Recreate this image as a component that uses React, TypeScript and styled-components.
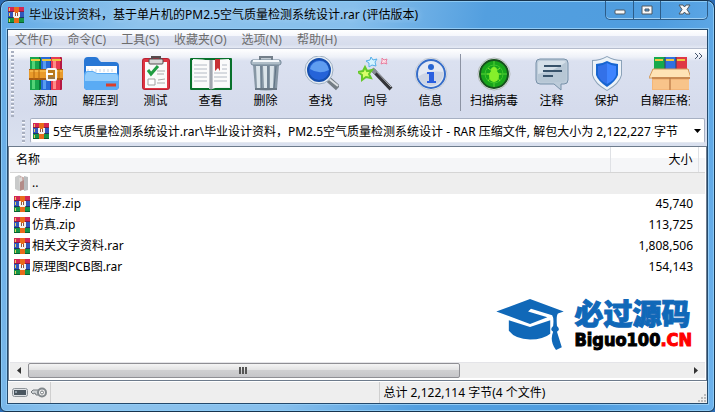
import React from "react";
import styled, { createGlobalStyle } from "styled-components";

const Global = createGlobalStyle`
  * { box-sizing: border-box; }
  body { margin: 0; background: #2b6cb4; }
  body, button, input, table {
    font-family: "Noto Sans", "Noto Sans CJK SC", sans-serif;
    font-size: 12px;
    line-height: 16px;
    color: #000;
  }
  button { border: 0; padding: 0; background: none; }
  svg { display: block; flex: none; }
`;

const Window = styled.div`
  min-height: 100vh;
  display: flex;
  flex-direction: column;
  padding: 0 6px 7px;
  border: 1px solid #17344e;
  border-radius: 8px 8px 6px 6px;
  box-shadow: inset 0 0 0 1px #8ccaf5;
  background: linear-gradient(100deg, #62aae6 0%, #8ec3ec 18%, #87bfec 45%, #539fdf 62%, #4f9ddf 84%, #6db2ec 100%);
`;

const TitleBar = styled.header`
  height: 28px;
  flex: none;
  display: flex;
  align-items: center;
  padding-left: 1px;
`;

const Title = styled.h1`
  flex: 1;
  min-width: 0;
  margin: 0 0 0 5px;
  font-size: 12px;
  line-height: 16px;
  font-weight: 400;
  white-space: nowrap;
  overflow: hidden;
  text-shadow: 0 0 6px #b9dcf7;
`;

const Caption = styled.div`
  align-self: flex-start;
  display: flex;
  height: 19px;
  border: 1px solid #2c5c88;
  border-top: 0;
  border-radius: 0 0 5px 5px;
  box-shadow: inset 0 -1px 0 #9fd0f5;
`;

const CaptionButton = styled.button<{ $wide?: boolean }>`
  width: ${(p) => (p.$wide ? 47 : 27)}px;
  display: flex;
  align-items: center;
  justify-content: center;
  & + & { border-left: 1px solid #2c5c88; }
`;

const Client = styled.div`
  flex: 1;
  display: flex;
  flex-direction: column;
  border: 1px solid #24496b;
  outline: 1px solid #92cbf5;
  background: #eee;
`;

const MenuBar = styled.nav`
  height: 19px;
  flex: none;
  display: flex;
  padding-top: 1px;
  background: linear-gradient(#fff 0%, #f5f7fc 32%, #dde2f0 36%, #d6dcec 80%, #e4e9f4 100%);
  border-bottom: 1px solid #b5bccd;
`;

const MenuItem = styled.button`
  padding: 0 8px 0 7px;
  color: #6d6d6d;
  white-space: nowrap;
`;

const Bars = styled.div`
  flex: none;
  background: linear-gradient(#fff 0, #eef1f8 8px, #dbe1f0 12px, #d5dbec 60px, #dae1ef 100%);
`;

const Band = styled.div`
  display: flex;
`;

const Grip = styled.div`
  width: 3px;
  margin: 2px 1px 0 3px;
  flex: none;
  background: repeating-linear-gradient(#a9b0c0 0, #a9b0c0 2px, #f8f9fc 2px, #f8f9fc 3px, transparent 3px, transparent 4px);
`;

const Tools = styled.div`
  flex: 1;
  min-width: 0;
  display: flex;
  overflow: hidden;
  height: 68px;
  padding-top: 7px;
  margin-left: 3px;
`;

const ToolButton = styled.button<{ $width?: number }>`
  width: ${(p) => p.$width ?? 55}px;
  flex: none;
  display: flex;
  flex-direction: column;
  align-items: center;
  justify-content: flex-start;
  gap: 1px;
  white-space: nowrap;
`;

const ToolSeparator = styled.div`
  width: 1px;
  height: 57px;
  flex: none;
  background: #8c93a3;
  margin: -2px 3px 0 2px;
`;

const More = styled.button`
  width: 17px;
  height: 14px;
  flex: none;
  display: flex;
  justify-content: center;
  align-items: center;
`;

const AddressBand = styled(Band)`
  height: 29px;
  padding: 1px 2px 3px 11px;
`;

const AddressBox = styled.div`
  flex: 1;
  min-width: 0;
  display: flex;
  align-items: center;
  margin-left: 4px;
  padding-left: 2px;
  border: 1px solid #a7b0c2;
  border-bottom-color: #e4e8f0;
  border-radius: 2px;
  background: #fff;
`;

const AddressInput = styled.input`
  flex: 1;
  min-width: 0;
  height: 22px;
  margin-left: 4px;
  padding: 0;
  border: 0;
  outline: 0;
  background: transparent;
`;

const DropButton = styled.button`
  width: 14px;
  height: 22px;
  display: flex;
  align-items: center;
  justify-content: center;
`;

const ListPane = styled.main`
  position: relative;
  flex: 1;
  display: flex;
  flex-direction: column;
  justify-content: space-between;
  padding: 0 1px 2px;
  border: 1px solid #6d7b8c;
  background: #fff;
`;

const Files = styled.table`
  width: 100%;
  border-collapse: collapse;
  table-layout: fixed;
`;

const Head = styled.th<{ $size?: boolean; $end?: boolean }>`
  width: ${(p) => (p.$size ? "88px" : p.$end ? "7px" : "auto")};
  height: 25px;
  padding: ${(p) => (p.$end ? "0" : "2px 5px 0 6px")};
  font-weight: 400;
  text-align: ${(p) => (p.$size ? "right" : "left")};
  background: linear-gradient(#fff 45%, #f5f6f8 46%);
  border-bottom: 1px solid #d5d5d5;
  border-right: ${(p) => (p.$end ? "0" : "1px solid #dfe1e5")};
`;

const FileRow = styled.tr<{ $active?: boolean }>`
  height: 21px;
  background: ${(p) =>
    p.$active ? "linear-gradient(90deg, #fff 20px, #eee 20px)" : "none"};
`;

const Cell = styled.td<{ $size?: boolean }>`
  padding: ${(p) => (p.$size ? "0 5px 0 0" : "0 0 0 4px")};
  text-align: ${(p) => (p.$size ? "right" : "left")};
`;

const EndCell = styled.td`
  padding: 0;
`;

const FileName = styled.div`
  display: flex;
  align-items: center;
  gap: 2px;
  height: 21px;
`;

const ScrollBar = styled.div`
  display: flex;
  height: 16px;
  background: #eee;
  border-top: 1px solid #e4e4e8;
`;

const ScrollArrow = styled.button`
  width: 18px;
  flex: none;
  display: flex;
  align-items: center;
  justify-content: center;
`;

const ScrollTrack = styled.div`
  flex: 1;
  display: flex;
`;

const ScrollThumb = styled.div`
  width: 65.5%;
  display: flex;
  align-items: center;
  justify-content: center;
  border: 1px solid #8f8f94;
  border-radius: 2px;
  background: linear-gradient(#f4f4f4, #e3e3e4 45%, #cfcfd1 50%, #c6c6c9);
`;

const Watermark = styled.div`
  position: absolute;
  right: 14px;
  bottom: 29px;
  display: flex;
  align-items: flex-start;
  gap: 8px;
`;

const BrandName = styled.div`
  height: 30px;
  font: 900 29px/32px "Liberation Sans", "Noto Sans CJK SC", sans-serif;
  color: #1068b8;
  -webkit-text-stroke: 1px #1068b8;
`;

const BrandSite = styled.div`
  font: 700 18px/22px "DejaVu Sans Condensed", "DejaVu Sans", sans-serif;
  -webkit-text-stroke: 1px currentColor;
  white-space: nowrap;
  span { color: #f00; }
`;

const StatusBar = styled.footer`
  flex: none;
  height: 22px;
  display: flex;
  border-top: 1px solid #fff;
  background: #eee;
`;

const StatusCell = styled.div<{ $icons?: boolean }>`
  ${(p) => (p.$icons ? "width: 42px; flex: none;" : "flex: 1;")}
  display: flex;
  align-items: center;
  gap: 2px;
  padding: 0 0 0 4px;
  & + & { border-left: 1px solid #cfcfcf; }
`;

const SizeGrip = styled.svg`
  align-self: flex-end;
  margin: 0 1px 1px auto;
`;

function RarIcon() {
  return (
    <svg width="16" height="16" viewBox="0 0 16 16" aria-hidden="true">
      <rect y="0" width="16" height="5" fill="#d32755" />
      <rect y="4" width="16" height="1" fill="#841d45" />
      <rect y="5" width="16" height="6" fill="#3157bd" />
      <rect y="10" width="16" height="1" fill="#1b3468" />
      <rect y="11" width="16" height="5" fill="#159447" />
      <rect y="15" width="16" height="1" fill="#096130" />
      <path d="M1 1h1v3H1zM1 6h1v3H1zM1 12h1v3H1z" fill="#e9ce5c" />
      <rect x="6" width="5" height="16" fill="#e96b1b" />
      <path d="M5 6h7v5H5z" fill="#8c5441" />
      <path d="M5 5h2v5H5zM10 5h2v5h-2zM6 9h5v2H6z" fill="#f4f1ed" />
      <path d="M8 6h1v3H8z" fill="#fff" />
    </svg>
  );
}

function FolderUpIcon() {
  return (
    <svg width="16" height="18" viewBox="0 0 16 18" aria-hidden="true">
      <path d="M1 3l4-2 2 1v14l-2 1-4-2z" fill="#c9caca" />
      <path d="M6 2l6 2v12H6z" fill="#c8a9a5" />
      <path d="M5 4l3-1 1 12-3 2z" fill="#dcd9d7" />
      <path d="M10 2l4 1v13l-4 1z" fill="#b9bcbe" />
      <path d="M6 8l4-2v9l-4 2z" fill="#b38c88" />
    </svg>
  );
}

function Book({ x, dark, main, light }: { x: number; dark: string; main: string; light: string }) {
  return (
    <g>
      <rect x={x} y="1" width="11" height="33" rx="1" fill={dark} />
      <rect x={x} y="1" width="9" height="33" fill={main} />
      <rect x={x + 2} y="5" width="3" height="28" fill={light} />
      <path d={`M${x + 1} 4h9`} stroke="#edc83e" strokeWidth="2" />
    </g>
  );
}

const drawings: Record<string, React.ReactNode> = {
  add: (
    <>
      <Book x={1} dark="#087637" main="#18a64d" light="#53d477" />
      <Book x={12} dark="#153fa4" main="#286ad6" light="#579cf0" />
      <Book x={22} dark="#b51742" main="#e73a50" light="#ff8a86" />
      <path d="M0 13h34v11H0z" fill="#a85a12" />
      <path d="M0 14h34v8H0z" fill="#e99a2a" />
      <path d="M1 15h32" stroke="#ffcf62" />
      <path d="M5 13v11M10 13v11M30 13v11" stroke="#b5690f" />
      <rect x="18" y="13" width="9" height="11" rx="1" fill="#b8791f" stroke="#f5f5f4" strokeWidth="2" />
      <path d="M17 18h7" stroke="#fff" strokeWidth="2" />
      <path d="M19 22h7" stroke="#777" />
    </>
  ),
  extract: (
    <>
      <path d="M0 5Q0 1 4 1h7q3 0 4 3l2 2h14q4 0 4 4v20q0 4-4 4H4q-4 0-4-4z" fill="#2877d5" />
      <path d="M2 10h31v9H2z" fill="#fff" />
      <path d="M4 13v3M8 13v3M12 13v3M16 13v3M20 13v3M24 13v3M28 13v3" stroke="#c7d4e4" />
      <path d="M0 19q0-4 4-4h5l4 2h18q4 0 4 4v9q0 4-4 4H4q-4 0-4-4z" fill="#5aabf4" />
      <path d="M1 20q1-4 3-4h5l4 2h18q3 0 3 3v4H1z" fill="#92ccfb" />
      <path d="M22 29h10" stroke="#dc3e29" strokeWidth="3" />
    </>
  ),
  test: (
    <>
      <rect x="3" y="2" width="28" height="32" rx="3" fill="#b82132" />
      <rect x="4" y="3" width="26" height="30" rx="2" fill="#df3442" />
      <path d="M6 6h22v26H6z" fill="#fafafa" />
      <rect x="10" y="3" width="14" height="5" rx="1" fill="#d8d8d8" stroke="#544c4f" />
      <path d="M13 3V1h8v2" fill="none" stroke="#554c4e" strokeWidth="2" />
      <path d="M9 14l3 4 7-8" fill="none" stroke="#219d42" strokeWidth="3" />
      <path d="M18 15h8M18 18h7M19 24l7-1M18 27h8" stroke="#aaa" />
      <path d="M9 23h7v6H9z" fill="#fff" stroke="#a1a1a1" />
    </>
  ),
  view: (
    <>
      <path d="M-4 3q0-1 1-1h40q1 0 1 1v30q0 1-1 1H-3q-1 0-1-1z" fill="#08712b" />
      <path d="M-2 4h18v28H-2zM18 4h18v28H18z" fill="#eeeff1" />
      <path d="M-1 3q11 0 17 2v27H-1zM18 5q6-2 17-2v28q-10-1-17 2z" fill="#fbfbfb" />
      <path d="M15 4h4v29h-4z" fill="#c3c5cc" />
      <path d="M17 4v30" stroke="#7f8791" />
      <path d="M0 9h13M0 13h13M0 17h13M0 21h13M0 25h13M20 17h13M20 21h13M20 25h13M28 9h5M28 13h5" stroke="#b3bac4" />
      <path d="M21 3h5v12l-2-3-3 3z" fill="#c73035" />
    </>
  ),
  remove: (
    <>
      <path d="M11 5V1h12v4" fill="#c0c9d1" stroke="#737e89" strokeWidth="2" />
      <path d="M4 9h26l-2 24q-11 3-22 0z" fill="#8797a5" />
      <path d="M7 10h4l1 22H8zM14 10h4v22h-3zM21 10h4l-1 22h-3z" fill="#dbe4ea" />
      <path d="M12 10v22M19 10v22M27 10l-2 22" stroke="#5f7385" />
      <rect x="2" y="4" width="30" height="5" rx="2" fill="#aebdc8" stroke="#738697" />
      <path d="M4 5h26" stroke="#f3f7fa" strokeWidth="2" />
      <path d="M6 33h22" stroke="#697784" strokeWidth="2" />
    </>
  ),
  find: (
    <>
      <path d="M24 23l10 9" stroke="#737c84" strokeWidth="6" />
      <path d="M24 22l10 8" stroke="#dde1e4" strokeWidth="2" />
      <circle cx="15" cy="14" r="14" fill="#e6edf4" stroke="#9fb0c2" />
      <circle cx="15" cy="14" r="11" fill="#2563d8" stroke="#164fae" strokeWidth="2" />
      <path d="M6 13q2-8 10-8 7 0 9 9-10 5-19-1z" fill="#5f9df0" />
    </>
  ),
  wizard: (
    <>
      <path d="M14 14l18 19" stroke="#343539" strokeWidth="4" />
      <path d="M15 13l17 18" stroke="#b9bec2" />
      <path d="M13 13l4 4" stroke="#858d93" strokeWidth="4" />
      <path d="M6 11l2 4 5-1-3 4 2 4-5-1-4 3v-5l-4-3 5-1z" fill="#d9ff6a" stroke="#65c829" strokeWidth="2" />
      <path d="M12 1l2 3 4-1-2 3 1 4-4-1-3 2v-4l-3-2 4-1z" fill="#d6f4ff" stroke="#55afe9" />
      <path d="M23 2l2 2 3-1-1 3 1 2-3-1-3 1 1-3z" fill="#ffe2e9" stroke="#e880a0" />
    </>
  ),
  info: (
    <>
      <circle cx="17" cy="18" r="16" fill="#f1f3f6" stroke="#c2c9d4" />
      <circle cx="17" cy="18" r="14" fill="#e4e9f3" stroke="#356cc8" strokeWidth="2" />
      <path d="M4 21q9-7 26-5-2 13-13 14Q8 30 4 21z" fill="#cdd5e5" />
      <circle cx="17" cy="11" r="3" fill="#2766d2" />
      <path d="M13 16h7v9h2v2h-9v-2h2v-7h-2z" fill="#2a5fe0" />
    </>
  ),
  virus: (
    <>
      <circle cx="17" cy="18" r="16" fill="#f5f6f5" stroke="#adb5b5" />
      <circle cx="17" cy="18" r="14" fill="#18a51b" stroke="#17501e" strokeWidth="2" />
      <path d="M4 18h26M17 5v26" stroke="#58cf39" />
      <circle cx="17" cy="18" r="9" fill="none" stroke="#3cc62a" />
      <path d="M11 12l4 3h4l4-3M10 18h5M19 18h5M11 25l3-4M23 25l-3-4" fill="none" stroke="#7be82f" />
      <ellipse cx="17" cy="20" rx="5" ry="6" fill="#86ef2b" />
      <circle cx="17" cy="14" r="3" fill="#86ef2b" />
    </>
  ),
  comment: (
    <>
      <path d="M5 3h24q4 0 4 4v17q0 4-4 4h-3v6l-7-6H5q-4 0-4-4V7q0-4 4-4z" fill="#bccbd9" stroke="#7790a8" />
      <path d="M5 5h24q2 0 2 2v17q0 2-2 2H5q-2 0-2-2V7q0-2 2-2z" fill="#d5e0e9" />
      <path d="M3 18q17-3 28-12v18q0 2-2 2H5q-2 0-2-2z" fill="#b7c7d5" />
      <path d="M9 10h17M8 15h19M8 20h10" stroke="#38536b" strokeWidth="2" />
    </>
  ),
  protect: (
    <>
      <path d="M17 0q7 4 15 4v15q-2 9-15 16Q4 28 2 19V4q8 0 15-4z" fill="#8ba2b9" />
      <path d="M17 1q7 4 14 4v14q-2 8-14 15Q5 27 3 19V5q7 0 14-4z" fill="#edf3f8" />
      <path d="M17 5q5 3 11 3v11q-2 6-11 12Q8 25 6 19V8q6 0 11-3z" fill="#1765d0" />
      <path d="M17 7q5 3 9 3v9q-1 5-9 9z" fill="#3e84ff" />
      <path d="M17 7q-5 3-9 3v9q1 5 9 9z" fill="#3371e8" />
    </>
  ),
  sfx: (
    <>
      <path d="M1 1h11v13H1z" fill="#15a94b" />
      <path d="M12 1h11v13H12z" fill="#2f70df" />
      <path d="M23 1h11v13H23z" fill="#df3744" />
      <path d="M12 1v12M23 1v12" stroke="#34405f" />
      <path d="M2 4h8M13 4h8M24 4h8" stroke="#efc83e" strokeWidth="2" />
      <path d="M-1 13h37v21H-1z" fill="#f4b678" />
      <path d="M0 13h35l3 9H-4z" fill="#ffe3b5" stroke="#d39a5d" />
      <path d="M0 24h16v9H0zM18 24h18v9H18z" fill="#f8c48a" />
      <path d="M-1 22h38" stroke="#c98a52" strokeWidth="2" />
      <path d="M17 22v12" stroke="#af7444" />
    </>
  ),
};

function ToolIcon({ name }: { name: string }) {
  const wide = name === "view" || name === "sfx";
  return (
    <svg
      width={wide ? 42 : 36}
      height="36"
      viewBox={wide ? "-4 0 42 36" : "-1 0 36 36"}
      aria-hidden="true"
    >
      {drawings[name]}
    </svg>
  );
}

const menus = ["文件(F)", "命令(C)", "工具(S)", "收藏夹(O)", "选项(N)", "帮助(H)"];

const mainTools = [
  ["add", "添加"],
  ["extract", "解压到"],
  ["test", "测试"],
  ["view", "查看"],
  ["remove", "删除"],
  ["find", "查找"],
  ["wizard", "向导"],
  ["info", "信息"],
];

const files = [
  ["c程序.zip", "45,740"],
  ["仿真.zip", "113,725"],
  ["相关文字资料.rar", "1,808,506"],
  ["原理图PCB图.rar", "154,143"],
];

export default function App() {
  return (
    <>
      <Global />
      <Window>
        <TitleBar>
          <RarIcon />
          <Title>毕业设计资料，基于单片机的PM2.5空气质量检测系统设计.rar (评估版本)</Title>
          <Caption>
            <CaptionButton aria-label="最小化">
              <svg width="12" height="12">
                <rect x="1" y="6" width="10" height="4" rx="1" fill="#f8f8f8" stroke="#4d5862" />
              </svg>
            </CaptionButton>
            <CaptionButton aria-label="最大化">
              <svg width="12" height="12">
                <path d="M1 2h10v8H1zM4 5v2h4V5z" fill="#f8f8f8" fillRule="evenodd" stroke="#4d5862" />
              </svg>
            </CaptionButton>
            <CaptionButton $wide aria-label="关闭">
              <svg width="13" height="12">
                <path d="M1 1h4l1.5 2L8 1h4L9 5.5l3 4.500H8L6.500 8 5 10H1l3-4.500z" fill="#f8f8f8" stroke="#4d5862" />
              </svg>
            </CaptionButton>
          </Caption>
        </TitleBar>
        <Client>
          <MenuBar>
            {menus.map((m) => (
              <MenuItem key={m}>{m}</MenuItem>
            ))}
          </MenuBar>
          <Bars>
            <Band>
              <Grip />
              <Tools>
                {mainTools.map(([icon, label]) => (
                  <ToolButton key={icon}>
                    <ToolIcon name={icon} />
                    {label}
                  </ToolButton>
                ))}
                <ToolSeparator />
                <ToolButton $width={60}>
                  <ToolIcon name="virus" />
                  扫描病毒
                </ToolButton>
                <ToolButton>
                  <ToolIcon name="comment" />
                  注释
                </ToolButton>
                <ToolButton>
                  <ToolIcon name="protect" />
                  保护
                </ToolButton>
                <ToolButton $width={72}>
                  <ToolIcon name="sfx" />
                  自解压格式
                </ToolButton>
              </Tools>
              <More aria-label="更多">
                <svg width="9" height="6">
                  <path d="M1 0l3 3-3 3M5 0l3 3-3 3" fill="none" stroke="#44546c" />
                </svg>
              </More>
            </Band>
            <AddressBand>
              <Grip />
              <AddressBox>
                <RarIcon />
                <AddressInput
                  aria-label="地址"
                  defaultValue="5空气质量检测系统设计.rar\毕业设计资料，PM2.5空气质量检测系统设计 - RAR 压缩文件, 解包大小为 2,122,227 字节"
                />
                <DropButton aria-label="展开地址">
                  <svg width="7" height="4">
                    <path d="M0 0h7L3.500 4z" />
                  </svg>
                </DropButton>
              </AddressBox>
            </AddressBand>
          </Bars>
          <ListPane>
            <Files>
              <thead>
                <tr>
                  <Head scope="col">名称</Head>
                  <Head scope="col" $size>
                    大小
                  </Head>
                  <Head as="td" $end />
                </tr>
              </thead>
              <tbody>
                <FileRow $active>
                  <Cell>
                    <FileName>
                      <FolderUpIcon />
                      ..
                    </FileName>
                  </Cell>
                  <Cell $size />
                  <EndCell />
                </FileRow>
                {files.map(([name, size]) => (
                  <FileRow key={name}>
                    <Cell>
                      <FileName>
                        <RarIcon />
                        {name}
                      </FileName>
                    </Cell>
                    <Cell $size>{size}</Cell>
                    <EndCell />
                  </FileRow>
                ))}
              </tbody>
            </Files>
            <Watermark>
              <svg width="71" height="52" viewBox="0 0 71 54" aria-hidden="true">
                <path d="M0 13L35 0l35 13-6 2q-2 2-1 13 4 4 0 6l5 16-6 3q-7-9-3-19-4-2 0-6 1-8-1-11L36 10l-3 3 20 6-18 7z" fill="#1068b8" />
                <path d="M13 22l22 7 21-7v14q-7 6-21 6-15 0-22-9z" fill="#1068b8" />
              </svg>
              <div>
                <BrandName>必过源码</BrandName>
                <BrandSite>
                  Biguo100<span>.CN</span>
                </BrandSite>
              </div>
            </Watermark>
            <ScrollBar>
              <ScrollArrow aria-label="向左滚动">
                <svg width="4" height="7">
                  <path d="M4 0v7L0 3.500z" fill="#333" />
                </svg>
              </ScrollArrow>
              <ScrollTrack>
                <ScrollThumb>
                  <svg width="9" height="7">
                    <path d="M1 0v7M4 0v7M7 0v7" stroke="#555" strokeWidth="2" />
                  </svg>
                </ScrollThumb>
              </ScrollTrack>
              <ScrollArrow aria-label="向右滚动">
                <svg width="4" height="7">
                  <path d="M0 0v7l4-3.500z" fill="#333" />
                </svg>
              </ScrollArrow>
            </ScrollBar>
          </ListPane>
          <StatusBar>
            <StatusCell $icons>
              <svg width="16" height="9" aria-hidden="true">
                <rect x="0.500" y="0.500" width="15" height="8" rx="2" fill="#dfe2e5" stroke="#8d9398" />
                <rect x="2" y="2" width="12" height="5" fill="#4b5760" />
                <path d="M3 4h2" stroke="#d5e3ed" />
              </svg>
              <svg width="17" height="11" aria-hidden="true">
                <path d="M10 3H3L1 5l2 2 2-1 1 2h2l1-1h2" fill="#cdd1d3" stroke="#747a7e" />
                <circle cx="12" cy="5.500" r="4" fill="#eee" stroke="#80878b" strokeWidth="2" />
                <circle cx="12" cy="5.500" r="1.500" fill="#fff" stroke="#737a7e" />
              </svg>
            </StatusCell>
            <StatusCell />
            <StatusCell>
              总计 2,122,114 字节(4 个文件)
              <SizeGrip width="8" height="8" aria-hidden="true">
                <path d="M6 0h2v2H6zM3 3h2v2H3zM6 3h2v2H6zM0 6h2v2H0zM3 6h2v2H3zM6 6h2v2H6z" fill="#bbb" />
              </SizeGrip>
            </StatusCell>
          </StatusBar>
        </Client>
      </Window>
    </>
  );
}
